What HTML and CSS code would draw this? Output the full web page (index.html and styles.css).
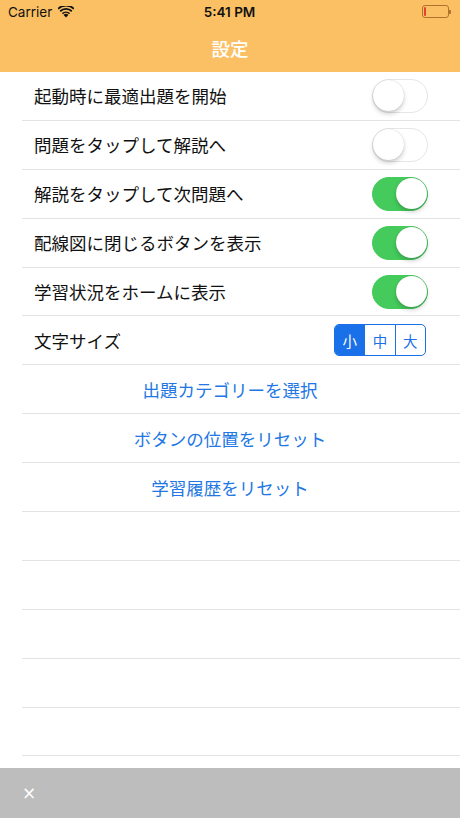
FILE: index.html
```html
<!DOCTYPE html>
<html lang="ja">
<head>
  <meta charset="UTF-8">
  <meta name="viewport" content="width=device-width, initial-scale=1.0">
  <title>設定</title>
  <link rel="stylesheet" href="styles.css">
</head>
<body>
  <div class="screen">
    <div class="header">
      <div class="status-bar">
        <div class="status-left">
          <span>Carrier</span>
          <svg class="wifi" width="16" height="12" viewBox="0 0 16 12">
            <path d="M8 11.5 L5.6 8.9 A3.6 3.6 0 0 1 10.4 8.9 Z" fill="#111"/>
            <path d="M3.9 7.1 A5.9 5.9 0 0 1 12.1 7.1 L11 8.3 A4.3 4.3 0 0 0 5 8.3 Z" fill="#111"/>
            <path d="M1.6 4.6 A9.2 9.2 0 0 1 14.4 4.6 L13.2 5.9 A7.5 7.5 0 0 0 2.8 5.9 Z" fill="#111"/>
            <path d="M-0.6 2.2 A12.3 12.3 0 0 1 16.6 2.2 L15.4 3.5 A10.6 10.6 0 0 0 0.6 3.5 Z" fill="#111"/>
          </svg>
        </div>
        <div class="status-time">5:41 PM</div>
        <div class="status-right">
          <div class="battery">
            <div class="battery-level"></div>
          </div>
          <div class="battery-nub"></div>
        </div>
      </div>
      <div class="nav-bar">
        <h1 class="nav-title">設定</h1>
      </div>
    </div>

    <div class="list">
      <div class="row">
        <span class="label">起動時に最適出題を開始</span>
        <div class="switch"><div class="knob"></div></div>
      </div>
      <div class="row">
        <span class="label">問題をタップして解説へ</span>
        <div class="switch"><div class="knob"></div></div>
      </div>
      <div class="row">
        <span class="label">解説をタップして次問題へ</span>
        <div class="switch on"><div class="knob"></div></div>
      </div>
      <div class="row">
        <span class="label">配線図に閉じるボタンを表示</span>
        <div class="switch on"><div class="knob"></div></div>
      </div>
      <div class="row">
        <span class="label">学習状況をホームに表示</span>
        <div class="switch on"><div class="knob"></div></div>
      </div>
      <div class="row">
        <span class="label">文字サイズ</span>
        <div class="segmented">
          <div class="segment selected">小</div>
          <div class="segment">中</div>
          <div class="segment">大</div>
        </div>
      </div>
      <div class="row action">出題カテゴリーを選択</div>
      <div class="row action">ボタンの位置をリセット</div>
      <div class="row action">学習履歴をリセット</div>
      <div class="row"></div>
      <div class="row"></div>
      <div class="row"></div>
      <div class="row"></div>
      <div class="row"></div>
    </div>

    <div class="toolbar">
      <span class="close">×</span>
    </div>
  </div>
</body>
</html>
```

FILE: styles.css
```css
body {
  margin: 0;
  padding: 0;
  background-color: #ffffff;
  font-family: "Noto Sans CJK JP", "Noto Sans", sans-serif;
}
.screen {
  width: 460px;
  height: 818px;
  display: flex;
  flex-direction: column;
  overflow: hidden;
}
.header {
  background-color: #fbc064;
  height: 72px;
  flex-shrink: 0;
}
.status-bar {
  height: 23px;
  display: flex;
  align-items: center;
  justify-content: space-between;
  padding: 0 8px;
  font-family: Inter, "Liberation Sans", sans-serif;
  font-size: 13.5px;
  color: #111;
}
.status-left {
  flex: 1;
  display: flex;
  align-items: center;
  gap: 6px;
}
.status-time {
  font-weight: 600;
}
.status-right {
  flex: 1;
  display: flex;
  align-items: center;
  justify-content: flex-end;
  padding-right: 1px;
}
.battery {
  width: 23px;
  height: 9px;
  border: 1px solid #b0732e;
  border-radius: 3px;
  padding: 1px;
}
.battery-level {
  width: 2px;
  height: 100%;
  background-color: #e8402c;
  border-radius: 1px;
}
.battery-nub {
  width: 2px;
  height: 4px;
  background-color: #b0732e;
  border-radius: 0 1px 1px 0;
}
.nav-bar {
  height: 49px;
  display: flex;
  align-items: center;
  justify-content: center;
}
.nav-title {
  margin: 0;
  color: #ffffff;
  font-size: 18.5px;
  font-weight: 500;
}
.list {
  flex: 1;
}
.row {
  box-sizing: border-box;
  height: 48.9px;
  margin-left: 22px;
  padding: 0 32px 0 12px;
  border-bottom: 1px solid #e3e3e6;
  display: flex;
  align-items: center;
  justify-content: space-between;
  font-size: 17.5px;
  color: #111;
}
.row.action {
  justify-content: center;
  padding: 0 22px 0 0;
  color: #2277e4;
}
.switch {
  box-sizing: border-box;
  width: 56px;
  height: 34px;
  border-radius: 17px;
  border: 1.5px solid #e6e6e6;
  background-color: #ffffff;
  position: relative;
}
.knob {
  position: absolute;
  top: 0;
  left: 0;
  width: 31px;
  height: 31px;
  border-radius: 50%;
  background-color: #ffffff;
  box-shadow: 0 3px 4px rgba(0, 0, 0, 0.18), 0 0 1px rgba(0, 0, 0, 0.25);
}
.switch.on {
  background-color: #44cb5b;
  border-color: #44cb5b;
}
.switch.on .knob {
  left: auto;
  right: 0;
}
.segmented {
  display: flex;
  width: 92px;
  height: 32px;
  margin-right: 2px;
  box-sizing: border-box;
  border: 1px solid #1a70e8;
  border-radius: 5px;
  overflow: hidden;
}
.segment {
  flex: 1;
  display: flex;
  align-items: center;
  justify-content: center;
  font-size: 14.5px;
  color: #1a70e8;
  border-left: 1px solid #1a70e8;
}
.segment:first-child {
  border-left: none;
}
.segment.selected {
  background-color: #1a70e8;
  color: #ffffff;
}
.toolbar {
  height: 50px;
  flex-shrink: 0;
  background-color: #bdbdbd;
  display: flex;
  align-items: center;
  padding-left: 22px;
}
.close {
  color: #ffffff;
  font-family: "DejaVu Sans", sans-serif;
  font-size: 17px;
}
```
